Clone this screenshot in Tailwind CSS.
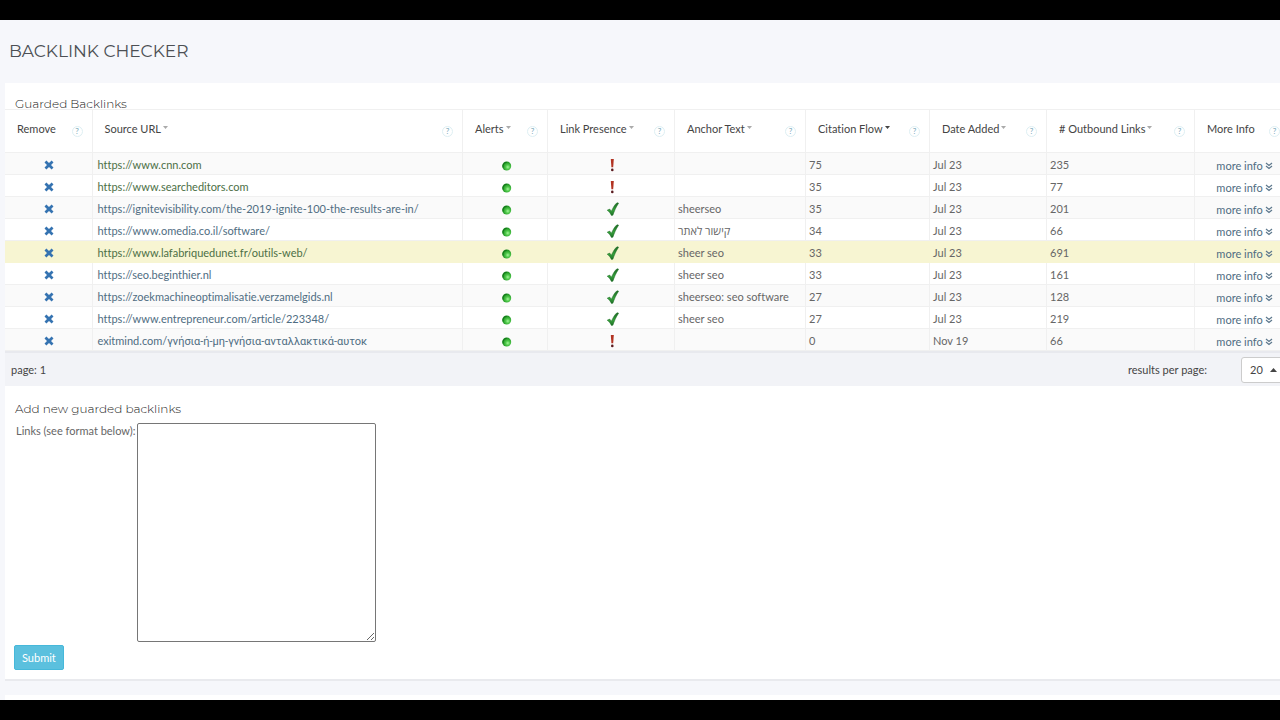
<!DOCTYPE html>
<html lang="en">
<head>
<meta charset="utf-8">
<meta name="viewport" content="width=device-width, initial-scale=1">
<title>Backlink Checker</title>
<script src="https://cdn.jsdelivr.net/npm/@tailwindcss/browser@4"></script>
</head>
<body class="bg-black font-[Lato,Roboto,'Open_Sans',sans-serif] text-[11px] leading-4 text-[#666] [font-variant-ligatures:none]">
<svg class="absolute size-0" aria-hidden="true">
  <defs>
    <radialGradient id="ball" cx="0.62" cy="0.62" r="0.6">
      <stop offset="0" stop-color="#a4f59a"/><stop offset="0.4" stop-color="#4fc94a"/><stop offset="1" stop-color="#178a1c"/>
    </radialGradient>
    <linearGradient id="leaf" x1="0" y1="0" x2="0" y2="1">
      <stop offset="0" stop-color="#1c6a24"/><stop offset="0.6" stop-color="#37a03c"/><stop offset="1" stop-color="#1d6f26"/>
    </linearGradient>
  </defs>
  <symbol id="remove" viewBox="0 0 10 10"><path d="M2.4 0.6 5 3.1 7.6 0.6 9.5 2.5 7 5 9.5 7.5 7.6 9.4 5 6.9 2.4 9.4 0.5 7.5 3 5 0.5 2.5Z" fill="#3573b1"/></symbol>
  <symbol id="on" viewBox="0 0 10 10"><circle cx="4.7" cy="5" r="4.5" fill="url(#ball)"/><path d="M1.3 6.5A3.7 3.7 0 0 1 4.7 1.4" fill="none" stroke="#0f7016" stroke-width="0.8"/></symbol>
  <symbol id="ok" viewBox="0 0 14 14"><path d="M1.2 8.2 3.7 7.1 5.4 9.2C7 5.6 8.8 2.6 11 0.7L12.6 1.2C10 5 8.3 9 6.9 13.2L5.4 13.4C4.4 11.2 3 9.4 1.2 8.2Z" fill="url(#leaf)" stroke="#1b6a22" stroke-width="0.5"/></symbol>
  <symbol id="missing" viewBox="0 0 14 14"><path d="M4.8 0.9H7.8L7.2 9.2H5.4Z" fill="#b23322"/><circle cx="6.3" cy="11.9" r="1.3" fill="#5a1a1e"/></symbol>
  <symbol id="more" viewBox="0 0 8 8"><path d="M1 1 4 3.5 7 1M1 4 4 6.5 7 4" fill="none" stroke="#5d788d" stroke-width="1.2"/></symbol>
</svg>

<div class="flex min-h-screen flex-col overflow-hidden border-y-[20px] border-black bg-[#f6f7fb]">
  <header class="px-[9px] pt-[19px] pb-5">
    <h1 class="font-[Montserrat,Inter,sans-serif] text-[17px] leading-6 text-[#4c4f54]">BACKLINK CHECKER</h1>
  </header>

  <main class="flex grow flex-col pl-[5px]">
    <section class="bg-white pt-[13px]">
      <h2 class="pl-[10px] font-[Montserrat,Inter,sans-serif] text-[12px] leading-4 font-light text-[#222]">Guarded Backlinks</h2>
      <div class="-mt-[3px] overflow-hidden">
        <table class="w-[calc(100%+10px)] table-fixed border-collapse">
          <colgroup>
            <col class="w-[87px]"><col><col class="w-[85px]"><col class="w-[127px]"><col class="w-[131px]"><col class="w-[124px]"><col class="w-[117px]"><col class="w-[148px]"><col class="w-[95px]">
          </colgroup>
          <thead><tr id="heads"></tr></thead>
          <tbody id="rows"></tbody>
        </table>
      </div>
      <div class="flex h-[35px] items-center border-t-2 border-[#e8e9ee] bg-[#f2f3f7] pl-[6px] text-[#444]">
        <span class="grow">page: 1</span>
        <label for="perpage" class="pr-[34px]">results per page:</label>
        <div class="relative -mr-3 h-[26px] w-[51px]">
          <select id="perpage" class="h-[26px] w-full appearance-none rounded-[3px] border border-[#ccc] bg-white pl-2"><option>20</option><option>50</option></select>
          <svg class="pointer-events-none absolute top-[11px] left-[29px] h-1 w-[7px]" viewBox="0 0 7 4"><path d="M0 4 3.5 0 7 4Z" fill="#444"/></svg>
        </div>
      </div>
    </section>

    <section class="border-b-2 border-[#e9eaee] bg-white pt-[15px] pb-[9px] pl-[9px]">
      <h2 class="pl-px font-[Montserrat,Inter,sans-serif] text-[12px] leading-4 font-light text-[#222]">Add new guarded backlinks</h2>
      <form>
        <div class="flex items-start gap-[2px] pt-[6px] pl-[2px]">
          <label for="links">Links (see format below):</label>
          <textarea id="links" class="h-[219px] w-[239px] rounded-[2px] border border-[#767676] bg-white"></textarea>
        </div>
        <button type="button" class="mt-[3px] h-[25px] rounded-[2px] border border-[#46b8da] bg-[#5bc0de] px-[7px] text-white">Submit</button>
      </form>
    </section>
    <section class="mt-[14px] grow bg-white"></section>
  </main>
</div>

<script>
const heads = [
  ['Remove', ''], ['Source URL', 'text-[#aaa]'], ['Alerts', 'text-[#aaa]'], ['Link Presence', 'text-[#aaa]'],
  ['Anchor Text', 'text-[#aaa]'], ['Citation Flow', 'text-[#444]'], ['Date Added', 'text-[#aaa]'], ['# Outbound Links', 'text-[#aaa]'], ['More Info', '']
];
document.getElementById('heads').innerHTML = heads.map(([name, arrow]) => `
  <th scope="col" class="h-[43px] border border-[#f0f0f0] p-0 pt-[11px] align-top font-normal text-[#444] first:border-l-0">
    <div class="flex items-start pr-[9px] pl-3">
      <span class="whitespace-nowrap">${name}</span>
      ${arrow ? `<svg class="mt-[5px] ml-[2px] h-[3px] w-[5px] ${arrow}" viewBox="0 0 5 3"><path d="M0 0H5L2.5 3Z" fill="currentColor"/></svg>` : ''}
      <button type="button" aria-label="Help: ${name}" class="mt-[5px] ml-auto size-[11px] shrink-0 rounded-full border border-[#deeff3] text-[8px] leading-[9px] text-[#78a8b8]">?</button>
    </div>
  </th>`).join('');

const green = 'text-[#4c6f46]', blue = 'text-[#4f6d82]';
const rows = [
  ['https://www.cnn.com', green, 'missing', '', '75', 'Jul 23', '235'],
  ['https://www.searcheditors.com', green, 'missing', '', '35', 'Jul 23', '77'],
  ['https://ignitevisibility.com/the-2019-ignite-100-the-results-are-in/', blue, 'ok', 'sheerseo', '35', 'Jul 23', '201'],
  ['https://www.omedia.co.il/software/', blue, 'ok', '<span lang="he" class="font-[\'Open_Sans\',sans-serif]">קישור לאתר</span>', '34', 'Jul 23', '66'],
  ['https://www.lafabriquedunet.fr/outils-web/', green, 'ok', 'sheer seo', '33', 'Jul 23', '691'],
  ['https://seo.beginthier.nl', blue, 'ok', 'sheer seo', '33', 'Jul 23', '161'],
  ['https://zoekmachineoptimalisatie.verzamelgids.nl', blue, 'ok', 'sheerseo: seo software', '27', 'Jul 23', '128'],
  ['https://www.entrepreneur.com/article/223348/', blue, 'ok', 'sheer seo', '27', 'Jul 23', '219'],
  ['exitmind.com/<span lang="el" class="font-[Roboto,sans-serif]">γνήσια-ή-μη-γνήσια-ανταλλακτικά-αυτοκ</span>', blue, 'missing', '', '0', 'Nov 19', '66']
];
const cell = (content, pad = 'pl-[3px]') => `<td class="h-[22px] border border-[#f0f0f0] p-0 pt-1 align-top whitespace-nowrap first:border-l-0 ${pad}">${content}</td>`;
document.getElementById('rows').innerHTML = rows.map(([url, tone, state, anchor, flow, date, out], i) => `
  <tr class="${i === 4 ? 'bg-[#f7f5d2] [&>td]:border-[#f7f5d2]' : 'odd:bg-[#fafafa]'}">
    ${cell('<button type="button" aria-label="Remove" class="mx-auto mt-[3px] block size-[10px]"><svg class="size-[10px]"><use href="#remove"/></svg></button>', 'pl-px')}
    ${cell(`<a href="#" class="${tone}">${url}</a>`, 'pl-[5px]')}
    ${cell('<svg role="img" aria-label="Alerts on" class="mx-auto mt-1 block size-[10px]"><use href="#on"/></svg>')}
    ${cell(`<svg role="img" aria-label="${state}" class="mx-auto mt-px block size-[14px]"><use href="#${state}"/></svg>`)}
    ${cell(anchor)}${cell(flow)}${cell(date)}${cell(out)}
    ${cell('<a href="#" class="mt-px flex items-center justify-center gap-[2px] text-[#4f6d82]">more info<svg class="size-2"><use href="#more"/></svg></a>', 'pl-[5px]')}
  </tr>`).join('');
</script>
</body>
</html>
